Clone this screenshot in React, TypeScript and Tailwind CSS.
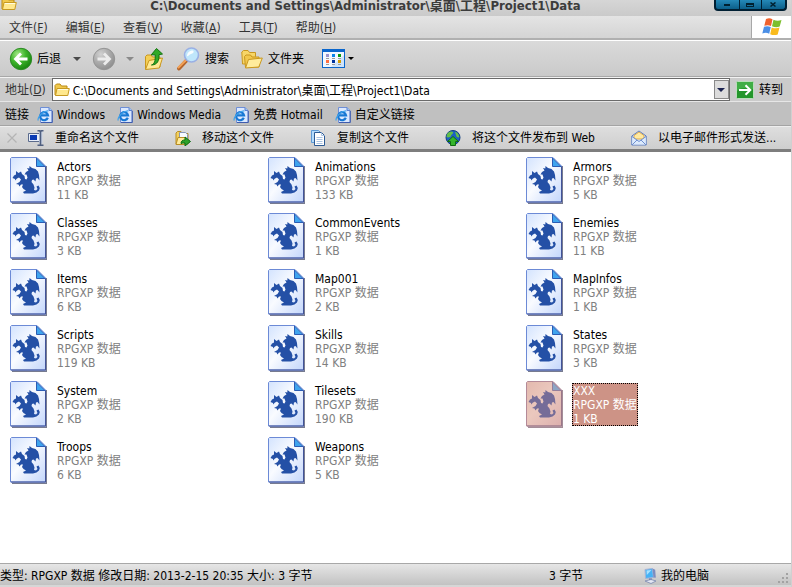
import type { ReactNode } from "react";
import { clsx } from "clsx";

interface DataFile {
  name: string;
  size: string;
  selected?: boolean;
}

const files: DataFile[] = [
  { name: "Actors", size: "11 KB" },
  { name: "Animations", size: "133 KB" },
  { name: "Armors", size: "5 KB" },
  { name: "Classes", size: "3 KB" },
  { name: "CommonEvents", size: "1 KB" },
  { name: "Enemies", size: "11 KB" },
  { name: "Items", size: "6 KB" },
  { name: "Map001", size: "2 KB" },
  { name: "MapInfos", size: "1 KB" },
  { name: "Scripts", size: "119 KB" },
  { name: "Skills", size: "14 KB" },
  { name: "States", size: "3 KB" },
  { name: "System", size: "2 KB" },
  { name: "Tilesets", size: "190 KB" },
  { name: "XXX", size: "1 KB", selected: true },
  { name: "Troops", size: "6 KB" },
  { name: "Weapons", size: "5 KB" },
];

const menus = [
  ["文件", "F"],
  ["编辑", "E"],
  ["查看", "V"],
  ["收藏", "A"],
  ["工具", "T"],
  ["帮助", "H"],
];

const links = ["Windows", "Windows Media", "免费 Hotmail", "自定义链接"];

const path = "C:\\Documents and Settings\\Administrator\\桌面\\工程\\Project1\\Data";

function FolderIcon({ className }: { className?: string }) {
  return (
    <svg viewBox="0 0 16 16" className={clsx("shrink-0", className)}>
      <path d="M1 13V3.5L2.5 2H6l1.5 2H13v9z" fill="#f0c84c" stroke="#b98a16" />
      <path d="M1.5 13.5 3 6.5h12.3l-1.5 7z" fill="#ffe88d" stroke="#c79a22" />
      <path d="M3.8 7.5h10.3" stroke="#fffbe0" />
    </svg>
  );
}

function FoldersIcon() {
  return (
    <svg viewBox="0 0 22 20" className="h-5 w-[22px] shrink-0">
      <path d="M1.5 15 .8 3 2.500 1.500h4.500l1.500 2h6v4L9 15z" fill="#f7d668" stroke="#c9971f" />
      <path d="M4.500 18.500 3.500 7.500 5 6h4.500l1.500 2H18v10z" fill="#f2c84d" stroke="#c9971f" />
      <path d="M4.500 19 7.500 10.500 21.300 9l-3.500 9z" fill="#ffec9c" stroke="#c9971f" />
    </svg>
  );
}

function RoundArrow({ back }: { back?: boolean }) {
  const id = back ? "round-back" : "round-forward";
  return (
    <svg viewBox="0 0 24 24" className="size-6 shrink-0">
      <defs>
        <radialGradient id={id} cx="35%" cy="28%" r="75%">
          <stop offset="0" stopColor={back ? "#a4e887" : "#d2d2d2"} />
          <stop offset=".5" stopColor={back ? "#3fb52b" : "#adadad"} />
          <stop offset="1" stopColor={back ? "#17850f" : "#8f8f8f"} />
        </radialGradient>
      </defs>
      <circle cx="12" cy="12" r="10.700" fill={`url(#${id})`} stroke={back ? "#2d8a25" : "#949494"} />
      <path
        d={back ? "M18.500 12H7M12 6.500 6.500 12l5.500 5.500" : "M5.500 12H17M12 6.500l5.500 5.500-5.500 5.500"}
        fill="none"
        stroke={back ? "#fff" : "#ececec"}
        strokeWidth="2.800"
      />
    </svg>
  );
}

function UpIcon() {
  return (
    <svg viewBox="0 0 20 24" className="h-6 w-5 shrink-0">
      <path d="M1.500 22V9.500L3 8h4l1.500 2H16v10z" fill="#f4cf56" stroke="#c9971f" />
      <path d="M1.500 22.500 5 13.500 18.500 11l-3.200 10z" fill="#ffe994" stroke="#c9971f" />
      <path d="M7.500 18c3-1 4-4 3.700-10.200H7.300L12.500 1.500l6 5.500-3.500.7c.2 6-1.500 10-7.500 10.300z" fill="#32a928" stroke="#14740f" />
    </svg>
  );
}

function SearchIcon() {
  return (
    <svg viewBox="0 0 24 24" className="size-6 shrink-0">
      <path d="m10 14-7 7.500" stroke="#b5652b" strokeWidth="3.800" strokeLinecap="round" />
      <path d="m9.500 13.500-7 7" stroke="#f3a257" strokeWidth="2" strokeLinecap="round" />
      <circle cx="15.500" cy="8" r="7" fill="#bfe6fb" stroke="#9ab0e4" strokeWidth="1.600" />
      <path d="M11 9c0-3 2-5.500 6-5.500 1.500 1.500 0 3-2 3.500S12 10 11 9z" fill="#fff" opacity=".9" />
    </svg>
  );
}

function ViewsIcon() {
  const cells = [
    [4, 5, "#9a93cc"],
    [10, 5, "#0a84e8"],
    [16, 5, "#0a9a10"],
    [4, 11, "#ff7043"],
    [10, 11, "#0035a0"],
    [16, 11, "#d39b00"],
  ] as const;
  return (
    <svg viewBox="0 0 23 19" className="h-[19px] w-[23px] shrink-0">
      <rect x=".5" y=".5" width="22" height="18" fill="#f2f8ff" stroke="#0a66cc" />
      <path d="M22 6v12H9z" fill="#cfe4fb" />
      <path d="M0 0h23v3H0z" fill="#0a66cc" />
      {cells.map(([x, y, fill]) => (
        <g key={`${x}-${y}`}>
          <rect x={x} y={y} width="3" height="3" fill={fill} />
          <rect x={x} y={y + 4} width="3" height="1" fill="#9b9b9b" />
        </g>
      ))}
    </svg>
  );
}

function Caret({ fill = "#000", small }: { fill?: string; small?: boolean }) {
  return (
    <svg viewBox="0 0 8 4" className={clsx("shrink-0", small ? "h-[3px] w-1.5" : "h-1 w-2")}>
      <path d="M0 0h8L4 4z" fill={fill} />
    </svg>
  );
}

function WindowsFlag() {
  return (
    <svg viewBox="0 0 20 18" className="h-[18px] w-5">
      <path d="M4 1c3-1.300 4.500-.7 6.500.3L9 8c-2-1-4-1.200-6.700-.2z" fill="#f0622d" />
      <path d="M11.500 1.800c2.500 1 5 1.300 8 .2L17.700 8.500c-2.500 1-5 .8-7.700-.2z" fill="#7cbf2c" />
      <path d="M2 8.800c2.500-1 4.500-.8 6.800.2L7.200 15.700C5 14.700 3 14.500.3 15.500z" fill="#4b8fe6" />
      <path d="M9.700 9.400c2.700 1 5 1.200 7.800.2L15.700 16.500c-2.700 1-5 .7-7.500-.3z" fill="#f9bb1d" />
    </svg>
  );
}

function IeIcon() {
  return (
    <svg viewBox="0 0 16 16" className="size-4 shrink-0">
      <path d="M3.500.5h8.500l3 3v12H3.500z" fill="#dbe9ff" stroke="#6f8fd6" />
      <path d="M15.300 4v11.500H4" fill="none" stroke="#3f5cae" />
      <path d="M12 .5v3h3" fill="#9cc3f5" stroke="#5d80cc" />
      <path d="M10.800 10.800A4 4 0 1 1 11 8.300H4" fill="none" stroke="#1878d4" strokeWidth="2.200" />
      <path d="M1.300 13.500C-.2 10.500 6.500 3.300 11.500 4" fill="none" stroke="#3fa2ea" strokeWidth="1.200" />
    </svg>
  );
}

function GoIcon() {
  return (
    <svg viewBox="0 0 18 18" className="size-[18px] shrink-0">
      <rect x=".5" y=".5" width="17" height="17" rx="1" fill="#23962b" stroke="#b9dfba" />
      <path d="M1 1h16v7C11 8 7 5 1 10z" fill="#4db653" opacity=".7" />
      <path d="M3 9h11M9.500 4.200 14.300 9l-4.800 4.800" fill="none" stroke="#fff" strokeWidth="2" />
    </svg>
  );
}

function RenameIcon() {
  return (
    <svg viewBox="0 0 16 16" className="size-4 shrink-0">
      <path d="M.5 3.500h11v8H.5z" fill="#e8eef8" stroke="#5b6b8c" />
      <path d="M2 5h7v5H2z" fill="#0a3bb4" />
      <path d="M11 1.500h3.500v12H11z" fill="#c9d3e6" />
      <path d="M9.500.8h2l1 .7 1-.7h2M12.500 1.500v13M9.500 15.200h2l1-.7 1 .7h2" fill="none" stroke="#4f5f80" strokeWidth="1.600" />
    </svg>
  );
}

function MoveIcon() {
  return (
    <svg viewBox="0 0 16 16" className="size-4 shrink-0">
      <path d="M1 14V3l1.500-1.500H6L7.500 3.500H13V14z" fill="#f3d05c" stroke="#b98e25" />
      <path d="M4.500 2.500h6l2 2v7h-8z" fill="#f7faff" stroke="#8896b5" />
      <path d="m1 14.500 2-7h8l-1.500 7z" fill="#ffeb9b" stroke="#b98e25" />
      <path d="M6 13.500c0-2.500 1.500-3.500 4-3.500V7l5.500 4.500L10 16v-3c-1.500 0-3 0-4 .5z" fill="#2ea22a" stroke="#0d6d12" />
    </svg>
  );
}

function CopyIcon() {
  return (
    <svg viewBox="0 0 16 16" className="size-4 shrink-0">
      <path d="M1.500.5h7l2 2v10h-9z" fill="#b5dbfb" stroke="#5e9ad6" />
      <path d="M4.500 2.500h7l3 3v10h-10z" fill="#fff" stroke="#2c5a94" />
      <path d="M11.500 2.500v3h3M6.500 7.500h6M6.500 9.500h6M6.500 11.500h6M6.500 13.500h6" fill="none" stroke="#a9c3e3" />
    </svg>
  );
}

function PublishIcon() {
  return (
    <svg viewBox="0 0 16 16" className="size-4 shrink-0">
      <circle cx="8" cy="7.500" r="7" fill="#1d5fc4" stroke="#123f80" />
      <path d="M2 4c2-3 5-3 6-2S6 5 6 6 3 8 1.500 7zM10 2c2 0 4 2 4.300 5-1.500 1-3 0-3.300-2z" fill="#62bf4a" />
      <path d="m8 6.500 5.500 5h-3v4h-5v-4h-3z" fill="#34b52b" stroke="#0f6c12" />
    </svg>
  );
}

function MailIcon() {
  return (
    <svg viewBox="0 0 16 16" className="size-4 shrink-0">
      <path d="M.8 6 8 1l7.200 5v9H.8z" fill="#d9e7fb" stroke="#5f7fc0" />
      <path d="M3 5.500 8 2l5 3.500V9H3z" fill="#ffe9a0" stroke="#d79a34" strokeWidth=".8" />
      <path d="M1.300 7 8 11.500 14.700 7v7.500H1.300z" fill="#dceafc" />
      <path d="m1 6.500 7 5 7-5M1 15l5-5M15 15l-5-5" fill="none" stroke="#6f90d0" />
    </svg>
  );
}

function ComputerIcon() {
  return (
    <svg viewBox="0 0 14 16" className="h-4 w-3.5 shrink-0">
      <path d="m2 1.500 7.500-1 1 9-8 1z" fill="#46b2f5" stroke="#a8b5d6" />
      <path d="m9.500.5 2.700 1.300.6 8-2.300-.3z" fill="#7c8cc0" />
      <path d="m3.500 2.500 5-.6-4.700 5z" fill="#a9e2ff" />
      <path d="M6 10.500h3v2H6z" fill="#6878a8" />
      <path d="m2 13 6-1.500 5 1.500-5 2.500z" fill="#e4e8f3" stroke="#7a88b0" strokeWidth=".8" />
    </svg>
  );
}

function DataFileIcon({ selected }: { selected?: boolean }) {
  const id = selected ? "page-selected" : "page";
  return (
    <svg viewBox="-1 -1 38 48" className="h-12 w-[38px] shrink-0">
      <defs>
        <linearGradient id={id} x1="0" y1="0" x2="1" y2="1">
          <stop offset="0" stopColor={selected ? "#e3b9ae" : "#d3e3fe"} />
          <stop offset=".45" stopColor={selected ? "#ebc8be" : "#f9fbff"} />
          <stop offset="1" stopColor={selected ? "#dcb0ae" : "#c3d6fb"} />
        </linearGradient>
      </defs>
      <path d="M2 46.300h34.300V9" fill="none" stroke={selected ? "#a48d98" : "#777b90"} strokeWidth="1.400" />
      <path
        d="M1.500.5H27L35.500 9v36H.5V1.500z"
        fill={`url(#${id})`}
        stroke={selected ? "#b48a98" : "#6c8ad6"}
      />
      <path d="M35.500 9.500v35.500H1" fill="none" stroke={selected ? "#9a7688" : "#41539a"} />
      <path d="M26.500 1v8.500h8.500z" fill={selected ? "#8da5c4" : "#3fa4ee"} stroke={selected ? "#947f9d" : "#2a5cb4"} />
      <path
        d="M2.500 21 4 18.500 6 17.500V14L8.500 16 11 14.500 12 17 14.500 19 15 22 16.500 22.500 17.500 20.500 16.500 17.500 14.500 17.500 16 15 18.500 13.500 17 11 19.300 11.500 19.500 9 22 11 25.500 12 28 14.500 29 18 29.500 23.500 27.500 21 26 21.500 25.500 24.500 23.500 22.500 22 23 21.500 25 23.500 27.500 24.500 30.500 24 33 26 33.500 27.500 32 26.500 29.500 28.500 28.500 29.800 31 29 33.500 26.500 35.500 23 36.500H14L13 35 16 33.500 13.500 32 12 30 13 27.500 11 27.500 9.500 29.500 8.500 27.500 6 27 9.500 25 11 22.500 9 20.500 7 21.500 5 23.500V22z"
        fill={selected ? "#756c98" : "#2450a6"}
      />
    </svg>
  );
}

function FileItem({ file }: { file: DataFile }) {
  return (
    <li>
      <button className="flex items-start gap-[9px] py-1 text-left">
        <DataFileIcon selected={file.selected} />
        <span
          className={clsx(
            "mt-[3px] block px-px pt-px leading-[14px]",
            file.selected
              ? "bg-[#cd9386] text-white outline-1 -outline-offset-1 outline-black outline-dotted"
              : "text-[#808080]",
          )}
        >
          <span className={clsx("block", !file.selected && "text-black")}>{file.name}</span>
          <span className="block">RPGXP 数据</span>
          <span className="block">{file.size}</span>
        </span>
      </button>
    </li>
  );
}

function Task({ icon, children }: { icon: ReactNode; children: ReactNode }) {
  return (
    <button className="flex shrink-0 items-center gap-[11px] whitespace-nowrap">
      {icon}
      {children}
    </button>
  );
}

function TitleBar() {
  return (
    <header className="flex h-4 items-start justify-between bg-linear-to-b from-[#d6d6d6] to-[#cacaca]">
      <FolderIcon className="-mt-1 ml-px size-4" />
      <h1 className="text-[13px] leading-3 font-bold whitespace-nowrap text-[#3c3c3c]">{path}</h1>
      <div className="mr-1 flex h-[11px] rounded-b border-x-2 border-b-2 border-[#001f33] bg-linear-to-b from-[#2589b8] to-[#0b5f8a]">
        <button aria-label="最小化" className="flex w-[23px] items-center justify-center">
          <span className="h-0.5 w-1.5 bg-[#00202f]" />
        </button>
        <button aria-label="最大化" className="flex w-[23px] items-center justify-center border-x border-[#001f33]">
          <span className="h-1 w-2 border border-t-2 border-[#00202f]" />
        </button>
        <button aria-label="关闭" className="flex w-[23px] items-center justify-center">
          <svg viewBox="0 0 6 5" className="h-[5px] w-1.5">
            <path d="m.5.500 5 4m0-4-5 4" stroke="#00202f" strokeWidth="1.500" />
          </svg>
        </button>
      </div>
    </header>
  );
}

export default function App() {
  return (
    <div className="flex min-h-screen flex-col border-r border-[#d0d0d0] bg-[#cdcdcd] font-['DejaVu_Sans_Condensed','Noto_Sans_CJK_SC',sans-serif] text-xs leading-4 text-black">
      <TitleBar />

      <nav className="flex h-6 items-stretch border-b-2 border-[#b0b0b0] bg-linear-to-b from-[#e4e4e4] to-[#d4d4d4] text-[#333]">
        <div className="flex flex-1 items-center gap-[18px] pt-0.5 pl-[9px]">
          {menus.map(([label, key]) => (
            <button key={key} className="whitespace-nowrap">
              {label}(<u>{key}</u>)
            </button>
          ))}
        </div>
        <div className="flex w-10 items-center justify-center border-l border-[#a8a8a8] bg-white">
          <WindowsFlag />
        </div>
      </nav>

      <div className="flex h-[37px] items-center border-t border-b border-t-white border-b-[#a8a8a8] bg-linear-to-b from-[#dadada] to-[#cacaca] pl-[9px]">
        <button className="flex items-center gap-1">
          <RoundArrow back />
          后退
        </button>
        <button aria-label="后退列表" className="ml-3">
          <Caret fill="#4a4a4a" />
        </button>
        <button aria-label="前进" className="ml-[11px]">
          <RoundArrow />
        </button>
        <button aria-label="前进列表" className="ml-2.5">
          <Caret fill="#8a8a8a" />
        </button>
        <button aria-label="向上" className="ml-2.5">
          <UpIcon />
        </button>
        <button className="ml-3 flex items-center gap-[5px]">
          <SearchIcon />
          搜索
        </button>
        <button className="ml-3 flex items-center gap-[5px]">
          <FoldersIcon />
          文件夹
        </button>
        <button aria-label="查看方式" className="ml-[18px] flex items-center gap-[3px]">
          <ViewsIcon />
          <Caret small />
        </button>
      </div>

      <div className="flex h-[25px] items-center border-t border-b border-t-[#f2f2f2] border-b-[#e6e6e6] bg-[#cbcbcb] pl-[5px]">
        <label htmlFor="address" className="shrink-0 text-[#333]">
          地址(<u>D</u>)
        </label>
        <div className="ml-1.5 flex h-[23px] flex-1 items-center border border-[#6a6a6a] bg-white pl-px">
          <FolderIcon className="size-4" />
          <input id="address" defaultValue={path} className="ml-[3px] h-5 min-w-0 flex-1 outline-none" />
          <button
            aria-label="地址列表"
            className="flex h-[19px] w-[15px] items-center justify-center border border-[#8a8a8a] bg-[#dcdcdc]"
          >
            <Caret fill="#1b2350" />
          </button>
        </div>
        <button className="mr-2 ml-1.5 flex items-center gap-[5px]">
          <GoIcon />
          转到
        </button>
      </div>

      <div className="flex h-6 items-center gap-3 border-b border-[#a4a4a4] bg-[#c0c0c0] pt-0.5 pl-[5px]">
        <span className="-mr-1">链接</span>
        {links.map((link) => (
          <a key={link} href="#" className="flex items-center gap-1 whitespace-nowrap">
            <IeIcon />
            {link}
          </a>
        ))}
      </div>

      <div className="flex h-[26px] items-center border-t border-b-3 border-t-[#eee] border-b-[#7e7e7e] bg-linear-to-b from-[#dedede] to-[#cecece] pl-[7px]">
        <button aria-label="取消" className="mr-[11px]">
          <svg viewBox="0 0 10 10" className="size-2.5">
            <path d="m.5.500 9 9m0-9-9 9" stroke="#b4b4b4" strokeWidth="1.200" />
          </svg>
        </button>
        <div className="flex items-center gap-9">
          <Task icon={<RenameIcon />}>重命名这个文件</Task>
          <Task icon={<MoveIcon />}>移动这个文件</Task>
          <Task icon={<CopyIcon />}>复制这个文件</Task>
          <Task icon={<PublishIcon />}>将这个文件发布到 Web</Task>
          <Task icon={<MailIcon />}>以电子邮件形式发送...</Task>
        </div>
      </div>

      <main className="flex-1 bg-white">
        <ul className="grid grid-cols-[repeat(auto-fill,258px)] pl-[9px]">
          {files.map((file) => (
            <FileItem key={file.name} file={file} />
          ))}
        </ul>
      </main>

      <footer className="flex h-6 items-center border-t border-b-2 border-t-[#a8a8a8] border-b-[#d6d6d6] bg-linear-to-b from-[#e6e6e6] to-[#c2c2c2] pt-0.5">
        <span className="flex-1">类型: RPGXP 数据 修改日期: 2013-2-15 20:35 大小: 3 字节</span>
        <span className="w-[94px]">3 字节</span>
        <span className="flex w-[134px] items-center gap-1">
          <ComputerIcon />
          我的电脑
        </span>
        <svg viewBox="0 0 12 12" className="mr-0.5 size-3 self-end">
          <path d="M9 0h2v2H9zM9 4h2v2H9zM5 4h2v2H5zM9 8h2v2H9zM5 8h2v2H5zM1 8h2v2H1z" fill="#a2a2a2" />
        </svg>
      </footer>
    </div>
  );
}
